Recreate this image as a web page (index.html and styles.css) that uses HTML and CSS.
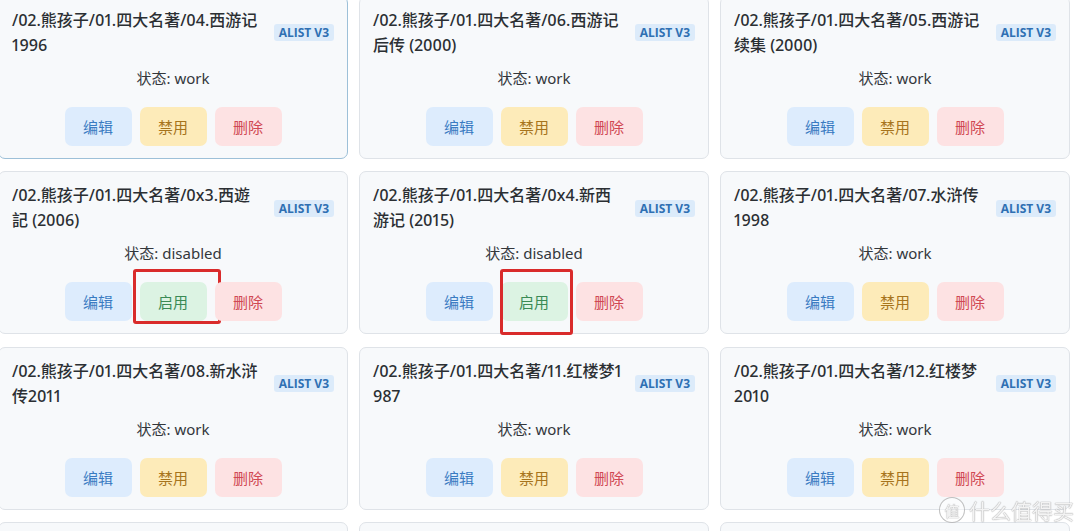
FILE: index.html
```html
<!DOCTYPE html>
<html lang="zh-CN">
<head>
<meta charset="utf-8">
<title>存储列表</title>
<link rel="stylesheet" href="styles.css">
</head>
<body>
<main class="grid">
  <section class="card card-active">
    <div class="head"><div class="title">/02.熊孩子/01.四大名著/04.西游记 1996</div><span class="badge">ALIST V3</span></div>
    <div class="status">状态: work</div>
    <div class="actions"><button class="btn edit">编辑</button><button class="btn disable">禁用</button><button class="btn del">删除</button></div>
  </section>
  <section class="card">
    <div class="head"><div class="title">/02.熊孩子/01.四大名著/06.西游记后传 (2000)</div><span class="badge">ALIST V3</span></div>
    <div class="status">状态: work</div>
    <div class="actions"><button class="btn edit">编辑</button><button class="btn disable">禁用</button><button class="btn del">删除</button></div>
  </section>
  <section class="card">
    <div class="head"><div class="title">/02.熊孩子/01.四大名著/05.西游记续集 (2000)</div><span class="badge">ALIST V3</span></div>
    <div class="status">状态: work</div>
    <div class="actions"><button class="btn edit">编辑</button><button class="btn disable">禁用</button><button class="btn del">删除</button></div>
  </section>

  <section class="card">
    <div class="head"><div class="title">/02.熊孩子/01.四大名著/0x3.西遊記 (2006)</div><span class="badge">ALIST V3</span></div>
    <div class="status">状态: disabled</div>
    <div class="actions"><button class="btn edit">编辑</button><button class="btn enable">启用<span class="mark mark-a"></span></button><button class="btn del">删除</button></div>
  </section>
  <section class="card">
    <div class="head"><div class="title">/02.熊孩子/01.四大名著/0x4.新西游记 (2015)</div><span class="badge">ALIST V3</span></div>
    <div class="status">状态: disabled</div>
    <div class="actions"><button class="btn edit">编辑</button><button class="btn enable">启用<span class="mark mark-b"></span></button><button class="btn del">删除</button></div>
  </section>
  <section class="card">
    <div class="head"><div class="title">/02.熊孩子/01.四大名著/07.水浒传 1998</div><span class="badge">ALIST V3</span></div>
    <div class="status">状态: work</div>
    <div class="actions"><button class="btn edit">编辑</button><button class="btn disable">禁用</button><button class="btn del">删除</button></div>
  </section>

  <section class="card">
    <div class="head"><div class="title">/02.熊孩子/01.四大名著/08.新水浒传2011</div><span class="badge">ALIST V3</span></div>
    <div class="status">状态: work</div>
    <div class="actions"><button class="btn edit">编辑</button><button class="btn disable">禁用</button><button class="btn del">删除</button></div>
  </section>
  <section class="card">
    <div class="head"><div class="title">/02.熊孩子/01.四大名著/11.红楼梦1987</div><span class="badge">ALIST V3</span></div>
    <div class="status">状态: work</div>
    <div class="actions"><button class="btn edit">编辑</button><button class="btn disable">禁用</button><button class="btn del">删除</button></div>
  </section>
  <section class="card">
    <div class="head"><div class="title">/02.熊孩子/01.四大名著/12.红楼梦 2010</div><span class="badge">ALIST V3</span></div>
    <div class="status">状态: work</div>
    <div class="actions"><button class="btn edit">编辑</button><button class="btn disable">禁用</button><button class="btn del">删除</button></div>
  </section>

  <section class="card"></section>
  <section class="card"></section>
  <section class="card"></section>
</main>
<div class="watermark"><span class="wm-logo">值</span><span class="wm-text">什么值得买</span></div>
</body>
</html>
```

FILE: styles.css
```css
html, body {
  margin: 0;
  padding: 0;
  background: #ffffff;
  overflow: hidden;
  height: 531px;
}

body {
  font-family: "Noto Sans", "Noto Sans CJK SC", sans-serif;
  color: #2b2f33;
}

.grid {
  display: grid;
  grid-template-columns: repeat(3, 350px);
  grid-auto-rows: 163px;
  column-gap: 11px;
  row-gap: 12.5px;
  margin: -4.5px 0 0 -2px;
}

.card {
  box-sizing: border-box;
  background: #f7f9fb;
  border: 1px solid #dfe3e8;
  border-radius: 7px;
  padding: 11px 13px 11px;
  display: flex;
  flex-direction: column;
}

.card-active {
  border-color: #9dc0d8;
}

.head {
  display: flex;
  align-items: center;
  gap: 8px;
  height: 50px;
}

.title {
  flex: 1;
  min-width: 0;
  font-size: 16px;
  line-height: 25px;
  font-weight: 500;
  color: #2b2f33;
  word-break: break-all;
  font-variant-numeric: proportional-nums;
}

.badge {
  flex: none;
  font-family: "Open Sans", "Noto Sans", sans-serif;
  font-size: 12px;
  font-weight: 700;
  line-height: 17px;
  color: #2f70b3;
  background: #dcebfa;
  border-radius: 3px;
  padding: 0 5px;
}

.status {
  margin-top: 9px;
  text-align: center;
  font-size: 15px;
  line-height: 22px;
  color: #33373b;
}

.actions {
  margin-top: 18px;
  display: flex;
  justify-content: center;
  gap: 8px;
}

.btn {
  position: relative;
  width: 67px;
  height: 39px;
  border: 0;
  border-radius: 7px;
  font-family: "Noto Sans CJK SC", sans-serif;
  font-size: 15px;
  padding: 0;
  cursor: pointer;
}

.edit { background: #ddecfd; color: #3a7bc2; }
.disable { background: #fdebb9; color: #a7741c; }
.del { background: #fde2e3; color: #d04852; }
.enable { background: #dcf3e3; color: #3a8a55; }

.mark {
  position: absolute;
  box-sizing: border-box;
  border: 3px solid #d92b2b;
  border-radius: 3px;
  pointer-events: none;
}

.mark-a {
  left: -7px;
  top: -13px;
  width: 88px;
  height: 55px;
}

.mark-b {
  left: -1px;
  top: -13px;
  width: 73px;
  height: 66px;
}

.watermark {
  position: fixed;
  right: 6px;
  bottom: 8px;
  display: flex;
  align-items: center;
  gap: 4px;
  color: rgba(255, 255, 255, 0.9);
  font-family: "Noto Sans CJK SC", sans-serif;
  text-shadow: 0 0 1px rgba(90, 90, 90, 0.5), 0 0 1px rgba(90, 90, 90, 0.5);
}

.wm-logo {
  width: 24px;
  height: 24px;
  border: 1.5px solid rgba(150, 150, 150, 0.6);
  border-radius: 50%;
  display: flex;
  align-items: center;
  justify-content: center;
  font-size: 15px;
  background: rgba(255, 255, 255, 0.5);
}

.wm-text {
  font-size: 21px;
  line-height: 24px;
}
```
